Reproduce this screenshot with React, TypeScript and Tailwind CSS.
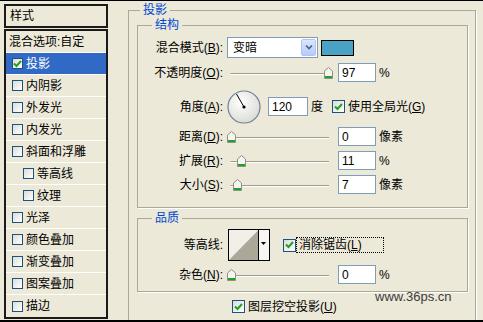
import type { ReactNode } from "react";

const listItems = [
  { text: "混合选项:自定", box: false },
  { text: "投影", checked: true, selected: true },
  { text: "内阴影" },
  { text: "外发光" },
  { text: "内发光" },
  { text: "斜面和浮雕" },
  { text: "等高线", indent: true },
  { text: "纹理", indent: true },
  { text: "光泽" },
  { text: "颜色叠加" },
  { text: "渐变叠加" },
  { text: "图案叠加" },
  { text: "描边" },
];

function Check({ checked, small }: { checked?: boolean; small?: boolean }) {
  return (
    <span
      className={`flex shrink-0 items-center justify-center border border-[#1C5180] bg-gradient-to-br from-[#DCDCD7] to-white ${
        small ? "h-[11px] w-[11px]" : "h-[13px] w-[13px]"
      }`}
    >
      {checked && (
        <svg width="9" height="8" viewBox="0 0 9 8">
          <path d="M1 3.5 L3.5 6 L8 1" stroke="#21A121" strokeWidth="2" fill="none" />
        </svg>
      )}
    </span>
  );
}

function Label({ text, k }: { text: string; k?: string }) {
  return (
    <div className="w-[85px] shrink-0 text-right">
      {text}
      {k && (
        <>
          (<u>{k}</u>)
        </>
      )}
      :
    </div>
  );
}

function Field({ value, className = "w-[38px]" }: { value: string; className?: string }) {
  return (
    <div className={`flex h-[19px] shrink-0 items-center border border-[#7F9DB9] bg-white pl-[3px] ${className}`}>
      {value}
    </div>
  );
}

function Slider({ pos }: { pos: number }) {
  return (
    <div className="relative h-[19px] w-[102px] shrink-0">
      <div className="absolute left-[3px] right-0 top-[10px] h-[2px] rounded-l-full border-t border-[#9D9D92] bg-white" />
      <svg className="absolute top-[4px]" style={{ left: pos }} width="9" height="12" viewBox="0 0 9 12">
        <path d="M0.5 11.5 V4 L4.5 0.5 L8.5 4 V11.5 Z" fill="#F6F5F0" stroke="#8E8F8F" />
        <rect x="1" y="9" width="7" height="2" fill="#21A121" />
      </svg>
    </div>
  );
}

function SliderRow({ label, k, pos, value, unit, className }: { label: string; k: string; pos: number; value: string; unit: string; className: string }) {
  return (
    <div className={`flex h-[19px] items-center ${className}`}>
      <Label text={label} k={k} />
      <div className="ml-[4px] flex items-center">
        <Slider pos={pos} />
        <Field value={value} className="ml-[9px] w-[38px]" />
        <span className="ml-[3px]">{unit}</span>
      </div>
    </div>
  );
}

function Group({ title, className, children }: { title: string; className: string; children: ReactNode }) {
  return (
    <fieldset className={`border border-[#ACA899] shadow-[1px_1px_0_#fff] ${className}`}>
      <legend className="ml-[14px] bg-[#ECE9D8] px-[3px] text-[12px] leading-[14px] text-[#0046D5]">{title}</legend>
      {children}
    </fieldset>
  );
}

export default function App() {
  return (
    <div className="relative flex h-[322px] w-[483px] overflow-hidden border-t border-b-2 border-black bg-[#ECE9D8] font-['Liberation_Sans','Noto_Sans_CJK_SC',sans-serif] text-[12px] leading-none text-black">
      {/* left style list */}
      <div className="ml-[4px] mt-[3px] flex w-[104px] shrink-0 flex-col">
        <div className="flex h-[24px] items-center border-2 border-[#1A1A1A] pl-[4px]">样式</div>
        <div className="mt-[1px] flex flex-col border-2 border-[#1A1A1A]">
          {listItems.map((it, i) => (
            <div
              key={it.text}
              className={`flex h-[22px] items-center ${i < listItems.length - 1 ? "border-b border-white" : ""} ${
                it.selected ? "bg-[#316AC5] text-white" : ""
              } ${it.box === false ? "pl-[3px]" : it.indent ? "pl-[17px]" : "pl-[6px]"}`}
            >
              {it.box !== false && <Check checked={it.checked} small />}
              <span className={it.box === false ? "" : "ml-[3px]"}>{it.text}</span>
            </div>
          ))}
        </div>
      </div>

      {/* right panel */}
      <fieldset className="ml-[20px] mt-[2px] h-[330px] w-[348px] shrink-0 border border-[#ACA899] shadow-[1px_1px_0_#fff]">
        <legend className="ml-[11px] bg-[#ECE9D8] px-[3px] text-[12px] leading-[14px] text-[#0046D5]">投影</legend>

        <Group title="结构" className="ml-[8px] mr-[7px] mt-[1px] pb-[13px]">
          <div className="mt-[5px] flex h-[21px] items-center">
            <Label text="混合模式" k="B" />
            <div className="ml-[4px] flex items-center">
              <div className="flex h-[21px] w-[91px] items-center border border-[#7F9DB9] bg-white">
                <span className="flex-1 pl-[5px]">变暗</span>
                <span className="mr-px flex h-[17px] w-[15px] items-center justify-center rounded-[2px] border border-[#B1C3F0] bg-gradient-to-b from-[#DCE6FD] to-[#B7CBF7]">
                  <svg width="8" height="5" viewBox="0 0 8 5">
                    <path d="M1 0.5 L4 3.5 L7 0.5" stroke="#4D6185" strokeWidth="1.6" fill="none" />
                  </svg>
                </span>
              </div>
              <div className="ml-[3px] h-[16px] w-[33px] border border-black bg-[#4AA3C4]" />
            </div>
          </div>

          <SliderRow label="不透明度" k="O" pos={97} value="97" unit="%" className="mt-[5px]" />

          <div className="mt-[8px] flex h-[33px] items-center">
            <Label text="角度" k="A" />
            <div className="ml-[4px] flex items-center">
              <svg width="34" height="34" viewBox="0 0 34 34">
                <defs>
                  <radialGradient id="dial" cx="40%" cy="35%" r="70%">
                    <stop offset="0" stopColor="#FFFFFF" />
                    <stop offset="1" stopColor="#DADAD4" />
                  </radialGradient>
                </defs>
                <circle cx="17" cy="17" r="16" fill="url(#dial)" stroke="#6F7E9C" strokeWidth="1.2" />
                <line x1="17" y1="17" x2="9.5" y2="4" stroke="#000" strokeWidth="1" />
                <circle cx="17" cy="17" r="1.6" fill="#000" />
              </svg>
              <Field value="120" className="ml-[7px] w-[40px]" />
              <span className="ml-[3px]">度</span>
              <span className="ml-[9px]">
                <Check checked />
              </span>
              <span className="ml-[3px]">
                使用全局光(<u>G</u>)
              </span>
            </div>
          </div>

          <SliderRow label="距离" k="D" pos={0} value="0" unit="像素" className="mt-[4px]" />
          <SliderRow label="扩展" k="R" pos={10} value="11" unit="%" className="mt-[5px]" />
          <SliderRow label="大小" k="S" pos={6} value="7" unit="像素" className="mt-[5px]" />
        </Group>

        <Group title="品质" className="ml-[8px] mr-[7px] mt-[3px] pb-[7px]">
          <div className="mt-[4px] flex h-[32px] items-center">
            <Label text="等高线" />
            <div className="ml-[5px] flex items-center">
              <svg width="42" height="32" viewBox="0 0 42 32">
                <rect x="0.5" y="0.5" width="41" height="31" fill="#F1EFE8" stroke="#000" />
                <polygon points="1,31 30,1.5 30,31" fill="#ACA899" />
                <line x1="30.5" y1="1" x2="30.5" y2="31" stroke="#000" />
                <rect x="31" y="1" width="10" height="30" fill="#F7F6F2" />
                <polygon points="33,13 38,13 35.5,16" fill="#000" />
              </svg>
              <span className="ml-[13px]">
                <Check checked />
              </span>
              <span className="flex h-[16px] w-[88px] items-center border border-dotted border-black pl-[2px]">
                消除锯齿(<u>L</u>)
              </span>
            </div>
          </div>
          <SliderRow label="杂色" k="N" pos={0} value="0" unit="%" className="mt-[4px]" />
        </Group>

        <div className="mt-[8px] flex items-center pl-[103px]">
          <Check checked />
          <span className="ml-[3px]">
            图层挖空投影(<u>U</u>)
          </span>
        </div>
      </fieldset>

      <span className="absolute left-[375px] top-[289px] font-['Liberation_Sans',sans-serif] text-[13px] leading-[13px] text-[#3C3C3C]">
        www.36ps.cn
      </span>
    </div>
  );
}
